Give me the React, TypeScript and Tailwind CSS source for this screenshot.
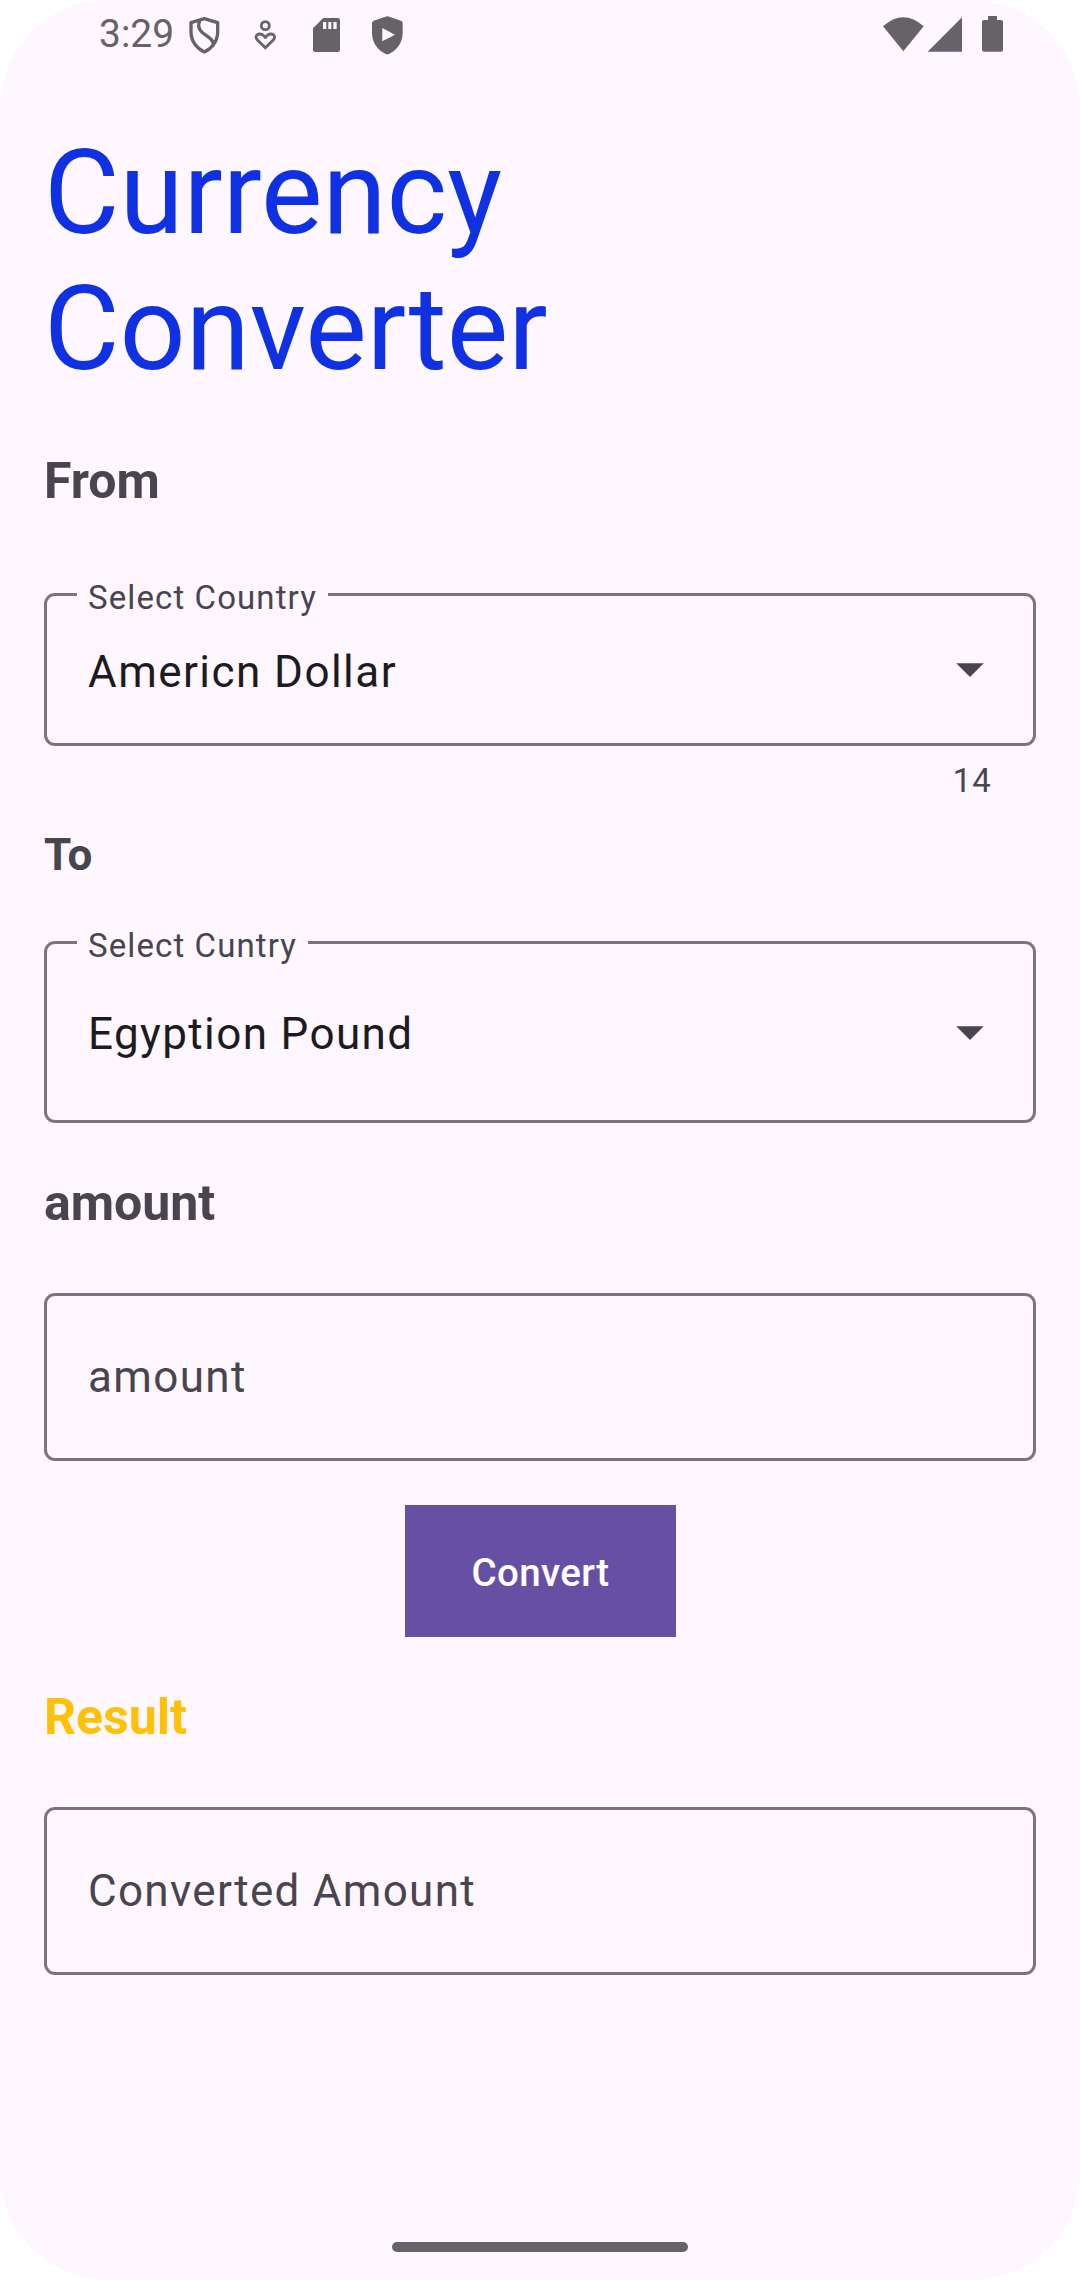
import type { ReactNode } from "react";

function Glyph({ box, className, children }: { box: string; className: string; children: ReactNode }) {
  return (
    <svg viewBox={box} className={className} fill="#656367" aria-hidden="true">
      {children}
    </svg>
  );
}

function StatusBar() {
  return (
    <header className="flex h-[65px] items-start justify-between pl-[99px]">
      <div className="flex">
        <span className="mt-[12px] w-[75px] text-[39px] leading-[45px] text-[#656367]">3:29</span>
        <div className="mt-[5px] flex">
          <Glyph box="-18 0 183 180" className="h-[60px] w-[61px]">
            <path
              d="M73 41 L113 53 V80 C113 107 97 130 73 141 C49 130 33 107 33 80 V53 Z M60 46 C53 60 56 73 66 82 C74 89 84 94 92 102 C100 110 102 117 98 124"
              fill="none"
              stroke="#656367"
              strokeWidth="10"
              strokeLinejoin="round"
            />
          </Glyph>
          <Glyph box="165 0 183 180" className="h-[60px] w-[61px]">
            <g fill="none" stroke="#656367" strokeWidth="8.5">
              <circle cx="256" cy="62" r="12" />
              <path d="M256 128 L233 106 C223 95 231 86 241 87 C249 88 256 95 256 101 C256 95 263 88 271 87 C281 86 289 95 279 106 Z" />
            </g>
          </Glyph>
          <Glyph box="348 0 183 180" className="h-[60px] w-[61px]">
            <path d="M430 39 H473 Q480 39 480 46 V134 Q480 141 473 141 H406 Q399 141 399 134 V70 Z" />
            <path d="M429 51h10v21h-10z M445 51h9v21h-9z M460 51h10v21h-10z" fill="#fef7ff" />
          </Glyph>
          <Glyph box="531 0 183 180" className="h-[60px] w-[61px]">
            <path d="M616 35 Q622 32 628 35 L663 47 Q668 49 668 55 V84 C668 113 650 136 628 146 Q622 149 616 146 C594 136 576 113 576 84 V55 Q576 49 581 47 Z" />
            <path d="M607 69 L645 89 L607 109 Z" fill="#fef7ff" />
          </Glyph>
        </div>
      </div>
      <Glyph box="0 0 720 195" className="h-[65px] w-[240px]">
        <path d="M190 154 L129 79 Q190 25 251 79 Z" />
        <path d="M263 155 L366 52 V155 Z" />
        <path d="M444 48 H471 V60 H483 Q489 60 489 66 V149 Q489 155 483 155 H432 Q426 155 426 149 V66 Q426 60 432 60 H444 Z" />
      </Glyph>
    </header>
  );
}

function FieldLabel({ className, children }: { className: string; children: string }) {
  return (
    <span
      className={`absolute -top-[18px] left-[30px] bg-[#fef7ff] pl-[11px] text-[33px] leading-[40px] tracking-[0.0333em] whitespace-nowrap text-[#49454f] ${className}`}
    >
      {children}
    </span>
  );
}

function Caret({ className }: { className: string }) {
  return (
    <svg viewBox="0 0 28 14" className={`h-[14px] w-[28px] fill-[#49454f] ${className}`} aria-hidden="true">
      <path d="M0.25 0.25 H27.75 L14 14 Z" />
    </svg>
  );
}

const field =
  "relative flex items-center justify-between rounded-[11px] border-[3px] border-[#79747e] pl-[41px] pr-[49px] text-[44px] leading-[52px]";

export default function App() {
  return (
    <div className="h-[2280px] w-[1080px] bg-white font-['Roboto',sans-serif]">
      <div className="flex h-full flex-col overflow-hidden rounded-[108px] bg-[#fef7ff] text-[#49454f]">
        <StatusBar />
        <main className="flex flex-1 flex-col px-[44px] pt-[60px]">
          <h1 className="text-[116px] leading-[136px] text-[#1031e2]">
            Currency
            <br />
            Converter
          </h1>

          <h2 className="mt-[55px] text-[50px] leading-[58px] font-bold">From</h2>
          <div className={`${field} mt-[83px] h-[153px] pt-[5px] tracking-[1.45px] text-[#1d1b20]`}>
            <FieldLabel className="w-[251px]">Select Country</FieldLabel>
            <span>Americn Dollar</span>
            <Caret className="mb-[4px]" />
          </div>
          <div className="mt-[15px] pr-[44px] text-right text-[33px] leading-[40px] tracking-[0.0333em]">14</div>

          <h2 className="mt-[28px] text-[44px] leading-[52px] font-bold">To</h2>
          <div className={`${field} mt-[60px] h-[182px] pt-[4px] tracking-[1.375px] text-[#1d1b20]`}>
            <FieldLabel className="w-[231px]">Select Cuntry</FieldLabel>
            <span>Egyption Pound</span>
            <Caret className="mb-[2px]" />
          </div>

          <h2 className="mt-[51px] text-[50px] leading-[58px] font-bold">amount</h2>
          <div className={`${field} mt-[61px] h-[168px] tracking-[1.375px]`}>amount</div>

          <button className="mt-[44px] ml-[361px] h-[132px] w-[271px] bg-[#6750a4] pt-[3px] text-[38.5px] leading-[46px] font-medium tracking-[0.4px] text-white">
            Convert
          </button>

          <h2 className="mt-[51px] text-[50px] leading-[58px] font-bold text-[#ffc107]">Result</h2>
          <div className={`${field} mt-[61px] h-[168px] tracking-[1.3px]`}>Converted Amount</div>
        </main>
        <footer className="flex justify-center pb-[28px]">
          <div className="h-[10px] w-[296px] rounded-full bg-[#656367]" />
        </footer>
      </div>
    </div>
  );
}
